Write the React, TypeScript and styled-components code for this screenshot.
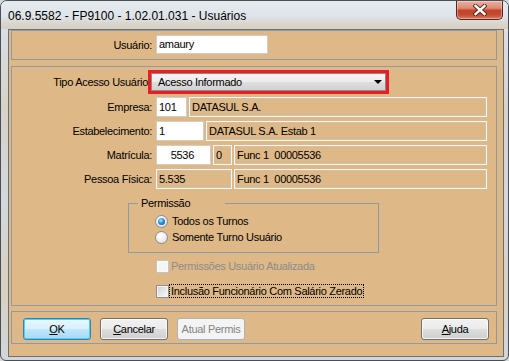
import React from "react";
import styled, { createGlobalStyle, css } from "styled-components";

const Global = createGlobalStyle`
  html, body { margin: 0; padding: 0; background: #d4d9de; }
  body {
    font-family: "Liberation Sans", Arial, sans-serif;
    font-size: 11px;
    letter-spacing: -0.3px;
    color: #000;
  }
  * { box-sizing: border-box; }
`;

const Window = styled.div`
  width: 509px;
  height: 361px;
  border: 1px solid #4b4f54;
  border-radius: 7px 7px 6px 6px;
  background: linear-gradient(180deg, #dfe5ec 0%, #d9dfe6 8%, #d6d2ca 30%, #d3d8dd 55%, #d8d0c4 80%, #d2d6da 100%);
  display: flex;
  flex-direction: column;
  overflow: hidden;
`;

const TitleBar = styled.div`
  height: 28px;
  flex: none;
  display: flex;
  align-items: flex-start;
  padding-left: 7px;
  background: linear-gradient(180deg, #e6ebf0 0%, #dee4ea 55%, #d9d3c8 85%, #d6cfc3 100%);
`;

const Title = styled.div`
  padding-top: 8px;
  font-size: 12px;
  letter-spacing: 0;
  line-height: 14px;
  color: #000;
`;

const CloseButton = styled.div`
  margin-left: auto;
  margin-right: 5px;
  width: 47px;
  height: 19px;
  border: 1px solid #5b2318;
  border-top: none;
  border-radius: 0 0 5px 5px;
  background: linear-gradient(180deg, #eab0a2 0%, #dc8a74 40%, #c4452a 52%, #c24a2f 75%, #d97a5e 100%);
  box-shadow: inset 0 0 0 1px rgba(255, 255, 255, 0.35);
  display: flex;
  align-items: center;
  justify-content: center;
`;

const Client = styled.div`
  margin: 0 4px 0 7px;
  height: 328px;
  flex: none;
  border: 1px solid #6d7073;
  background: #deb887;
  padding: 0 6px 12px 2px;
  display: flex;
  flex-direction: column;
`;

const Panel = styled.div<{ $h: number; $gap?: number }>`
  height: ${(p) => p.$h}px;
  margin-top: ${(p) => p.$gap ?? 0}px;
  flex: none;
  border: 1px solid #8e9aa6;
  display: flex;
  flex-direction: column;
`;

const TopPanel = styled(Panel)`
  padding-top: 4px;
`;

const MainPanel = styled(Panel)`
  padding-top: 3px;
`;

const ButtonPanel = styled(Panel)`
  flex-direction: row;
  align-items: flex-start;
  padding: 6px 7px 0 11px;
  gap: 9px;
`;

const Row = styled.div<{ $h?: number; $gap?: number }>`
  display: flex;
  align-items: center;
  height: ${(p) => p.$h ?? 20}px;
  margin-top: ${(p) => p.$gap ?? 0}px;
  flex: none;
`;

const Label = styled.div<{ $w?: number }>`
  width: ${(p) => p.$w ?? 140}px;
  margin-right: ${(p) => (p.$w ? 0 : 4)}px;
  text-align: right;
  white-space: nowrap;
  line-height: 14px;
`;

const Fields = styled.div`
  display: flex;
  gap: 2px;
`;

const Input = styled.div<{ $w: number; $h?: number; $right?: boolean }>`
  width: ${(p) => p.$w}px;
  height: ${(p) => p.$h ?? 20}px;
  background: #fff;
  border: 1px solid #cdcdcd;
  padding: ${(p) => (p.$right ? "0 16px 0 2px" : "0 2px")};
  text-align: ${(p) => (p.$right ? "right" : "left")};
  line-height: ${(p) => (p.$h ?? 20) - 2}px;
  white-space: pre;
  overflow: hidden;
`;

const Display = styled.div<{ $w: number }>`
  width: ${(p) => p.$w}px;
  height: 20px;
  border: 1px solid #f8f6f2;
  box-shadow: inset 0 0 0 1px #cbbfae;
  padding: 0 2px;
  line-height: 18px;
  white-space: pre;
  overflow: hidden;
`;

const ComboFrame = styled.div`
  width: 241px;
  height: 24px;
  border: 3px solid #ec1c24;
`;

const Combo = styled.div`
  height: 100%;
  border: 1px solid #8b8b8b;
  background: linear-gradient(180deg, #f4f4f4 0%, #ececec 48%, #dedede 52%, #d2d2d2 100%);
  display: flex;
  align-items: center;
  padding: 0 3px 0 6px;
  line-height: 14px;
`;

const ComboArrow = styled.span`
  margin-left: auto;
  width: 0;
  height: 0;
  border-left: 4px solid transparent;
  border-right: 4px solid transparent;
  border-top: 4px solid #000;
`;

const Group = styled.div`
  position: relative;
  margin: 14px 0 0 116px;
  width: 251px;
  height: 50px;
  flex: none;
  border: 1px solid #8e9aa6;
  padding: 9px 0 0 26px;
  display: flex;
  flex-direction: column;
`;

const Legend = styled.span`
  position: absolute;
  top: -8px;
  left: 9px;
  padding: 0 35px 0 3px;
  background: #deb887;
  line-height: 14px;
`;

const OptionRow = styled.div<{ $indent?: number; $gap?: number }>`
  display: flex;
  align-items: center;
  height: 16px;
  flex: none;
  margin-left: ${(p) => p.$indent ?? 0}px;
  margin-top: ${(p) => p.$gap ?? 0}px;
`;

const Radio = styled.span<{ $checked?: boolean }>`
  position: relative;
  width: 13px;
  height: 13px;
  flex: none;
  border-radius: 50%;
  border: 1px solid #8a8c8e;
  background: radial-gradient(circle at 40% 35%, #ffffff 0%, #ececec 55%, #d0d0d0 100%);
  ${(p) =>
    p.$checked &&
    css`
      &::after {
        content: "";
        position: absolute;
        left: 2px;
        top: 2px;
        width: 7px;
        height: 7px;
        border-radius: 50%;
        background: radial-gradient(circle at 40% 35%, #a6e2ff 0%, #2f93d8 45%, #0d3f78 100%);
      }
    `}
`;

const RadioText = styled.span`
  margin-left: 4px;
  line-height: 14px;
`;

const CheckBox = styled.span<{ $disabled?: boolean }>`
  width: 13px;
  height: 13px;
  flex: none;
  border: 1px solid ${(p) => (p.$disabled ? "#c3c3c3" : "#8e8f8f")};
  background: ${(p) =>
    p.$disabled
      ? "#f5f5f5"
      : "linear-gradient(135deg, #cbcdd1 0%, #e8e8e8 55%, #fafafa 100%)"};
  box-shadow: inset 0 0 0 1px ${(p) => (p.$disabled ? "#fafafa" : "#f4f4f4")};
`;

const CheckText = styled.span<{ $disabled?: boolean; $focused?: boolean }>`
  height: 14px;
  line-height: 12px;
  padding: 0 1px;
  border: 1px ${(p) => (p.$focused ? "dotted #000" : "solid transparent")};
  color: ${(p) => (p.$disabled ? "#8c8c8c" : "#000")};
  white-space: nowrap;
`;

const Button = styled.button<{ $variant?: "focused" | "disabled" }>`
  width: 68px;
  height: 22px;
  flex: none;
  padding: 0;
  font-family: inherit;
  font-size: 11px;
  letter-spacing: -0.3px;
  white-space: nowrap;
  color: #000;
  border: 1px solid #707070;
  border-radius: 3px;
  background: linear-gradient(180deg, #f2f2f2 0%, #ebebeb 48%, #dddddd 52%, #cfcfcf 100%);
  box-shadow: inset 0 0 0 1px rgba(255, 255, 255, 0.75);
  ${(p) =>
    p.$variant === "focused" &&
    css`
      border-color: #3c7fb1;
      background: linear-gradient(180deg, #eaf6fd 0%, #d9f0fc 48%, #bee6fd 52%, #a7d9f5 100%);
      box-shadow: inset 0 0 0 1px #48d3fb;
    `}
  ${(p) =>
    p.$variant === "disabled" &&
    css`
      border-color: #adb2b5;
      background: #f4f4f4;
      color: #838383;
      box-shadow: none;
    `}
`;

const PushRight = styled(Button)`
  margin-left: auto;
`;

export default function App() {
  return (
    <>
      <Global />
      <Window>
        <TitleBar>
          <Title>06.9.5582 - FP9100 - 1.02.01.031 - Usuários</Title>
          <CloseButton>
            <svg width="14" height="12" viewBox="0 0 14 12">
              <path d="M2.5 2 L11.5 10 M11.5 2 L2.5 10" stroke="#4a1b12" strokeWidth="4.2" strokeLinecap="square" />
              <path d="M2.5 2 L11.5 10 M11.5 2 L2.5 10" stroke="#ffffff" strokeWidth="2.4" strokeLinecap="square" />
            </svg>
          </CloseButton>
        </TitleBar>
        <Client>
          <TopPanel $h={30}>
            <Row $h={19}>
              <Label>Usuário:</Label>
              <Input $w={112} $h={19}>amaury</Input>
            </Row>
          </TopPanel>

          <MainPanel $h={240} $gap={6}>
            <Row $h={24}>
              <Label $w={136}>Tipo Acesso Usuário</Label>
              <ComboFrame>
                <Combo>
                  <span>Acesso Informado</span>
                  <ComboArrow />
                </Combo>
              </ComboFrame>
            </Row>
            <Row $gap={3}>
              <Label>Empresa:</Label>
              <Fields>
                <Input $w={31}>101</Input>
                <Display $w={298}>DATASUL S.A.</Display>
              </Fields>
            </Row>
            <Row $gap={4}>
              <Label>Estabelecimento:</Label>
              <Fields>
                <Input $w={48}>1</Input>
                <Display $w={281}>DATASUL S.A. Estab 1</Display>
              </Fields>
            </Row>
            <Row $gap={4}>
              <Label>Matrícula:</Label>
              <Fields>
                <Input $w={55} $right>5536</Input>
                <Display $w={19}>0</Display>
                <Display $w={253}>Func 1  00005536</Display>
              </Fields>
            </Row>
            <Row $gap={4}>
              <Label>Pessoa Física:</Label>
              <Fields>
                <Display $w={76}>5.535</Display>
                <Display $w={253}>Func 1  00005536</Display>
              </Fields>
            </Row>

            <Group>
              <Legend>Permissão</Legend>
              <OptionRow>
                <Radio $checked />
                <RadioText>Todos os Turnos</RadioText>
              </OptionRow>
              <OptionRow>
                <Radio />
                <RadioText>Somente Turno Usuário</RadioText>
              </OptionRow>
            </Group>

            <OptionRow $indent={144} $gap={5}>
              <CheckBox $disabled />
              <CheckText $disabled>Permissões Usuário Atualizada</CheckText>
            </OptionRow>
            <OptionRow $indent={144} $gap={9}>
              <CheckBox />
              <CheckText $focused>Inclusão Funcionário Com Salário Zerado</CheckText>
            </OptionRow>
          </MainPanel>

          <ButtonPanel $h={33} $gap={5}>
            <Button $variant="focused">
              <u>O</u>K
            </Button>
            <Button>
              <u>C</u>ancelar
            </Button>
            <Button $variant="disabled">Atual Permis</Button>
            <PushRight>
              <u>A</u>juda
            </PushRight>
          </ButtonPanel>
        </Client>
      </Window>
    </>
  );
}
